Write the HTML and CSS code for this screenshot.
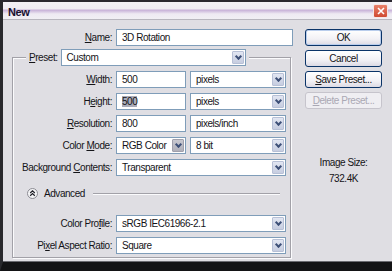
FILE: index.html
```html
<!DOCTYPE html>
<html lang="en">

<head>
  <meta charset="UTF-8">
  <meta name="viewport" content="width=device-width, initial-scale=1.0">
  <title>New</title>
  <link rel="stylesheet" href="styles.css">
</head>

<body>
  <div class="window">
    <div class="titlebar">
      <span class="title">New</span>
      <span class="close">
        <svg width="8" height="8" viewBox="0 0 8 8"><path d="M1 1 L7 7 M7 1 L1 7" stroke="#fff" stroke-width="1.6" /></svg>
      </span>
    </div>

    <div class="content">
      <div class="main">
        <div class="name-row">
          <label><u>N</u>ame:</label>
          <div class="field name-field">3D Rotation</div>
        </div>

        <fieldset class="preset">
          <legend>
            <label><u>P</u>reset:</label>
            <div class="field select preset-select">Custom<span class="arrow"></span></div>
          </legend>

          <div class="grid">
            <label><u>W</u>idth:</label>
            <div class="field">500</div>
            <div class="field select">pixels<span class="arrow"></span></div>

            <label>H<u>e</u>ight:</label>
            <div class="field"><span class="sel">500</span></div>
            <div class="field select">pixels<span class="arrow"></span></div>

            <label><u>R</u>esolution:</label>
            <div class="field">800</div>
            <div class="field select">pixels/inch<span class="arrow"></span></div>

            <label>Color <u>M</u>ode:</label>
            <div class="field select">RGB Color<span class="arrow hot"></span></div>
            <div class="field select">8 bit<span class="arrow"></span></div>

            <label>Background <u>C</u>ontents:</label>
            <div class="field select span2">Transparent<span class="arrow"></span></div>
          </div>

          <div class="advanced">
            <span class="toggle">
              <svg width="11" height="11" viewBox="0 0 11 11">
                <circle cx="5.5" cy="5.5" r="5" fill="#f4f4f6" stroke="#8c8c94" />
                <path d="M3.2 5 L5.5 2.8 L7.8 5 M3.2 7.8 L5.5 5.6 L7.8 7.8" fill="none" stroke="#202028" stroke-width="1.2" />
              </svg>
            </span>
            <span>Advanced</span>
            <span class="rule"></span>
          </div>

          <div class="grid">
            <label>Color Pro<u>f</u>ile:</label>
            <div class="field select span2">sRGB IEC61966-2.1<span class="arrow"></span></div>

            <label>Pi<u>x</u>el Aspect Ratio:</label>
            <div class="field select span2">Square<span class="arrow"></span></div>
          </div>
        </fieldset>
      </div>

      <div class="side">
        <div class="btn default">OK</div>
        <div class="btn">Cancel</div>
        <div class="btn"><u>S</u>ave Preset...</div>
        <div class="btn disabled"><u>D</u>elete Preset...</div>
        <div class="size">
          <div>Image Size:</div>
          <div>732.4K</div>
        </div>
      </div>
    </div>
  </div>
</body>

</html>
```

FILE: styles.css
```css
* {
  box-sizing: border-box;
}

body {
  margin: 0;
  background: #111;
  font-family: "Liberation Sans", Arial, sans-serif;
  font-size: 10px;
  letter-spacing: -0.45px;
  color: #141418;
}

u {
  text-decoration-thickness: 1px;
  text-underline-offset: 1px;
}

.window {
  width: 392px;
  height: 271px;
  display: flex;
  flex-direction: column;
  background: #dfdee3;
  border-top: 2px solid #2a2830;
  border-left: 3px solid #28282c;
  border-bottom: 9px solid #131315;
  box-shadow: inset 0 -1px 0 #6a6a70;
}

/* title bar */
.titlebar {
  height: 18px;
  display: flex;
  align-items: center;
  justify-content: space-between;
  padding: 0 4px 0 5px;
  background: linear-gradient(to bottom, #f3f1f6 0, #efecf3 40%, #c8b2d8 48%, #d9cbe4 58%, #eeeaf2 70%, #f1eff4 100%);
  border-bottom: 1px solid #b8b6be;
}

.title {
  font-size: 11px;
  font-weight: bold;
  color: #181030;
  padding-top: 2px;
}

.close {
  width: 15px;
  height: 14px;
  display: flex;
  align-items: center;
  justify-content: center;
  background: linear-gradient(#e8806a, #d04a32);
  border: 1px solid #f4e6e6;
  border-radius: 2px;
}

.content {
  flex: 1;
  display: flex;
  padding: 9px 0 0 9px;
}

.main {
  width: 284px;
}

/* form rows */
label {
  text-align: right;
  white-space: nowrap;
}

.name-row {
  display: flex;
  align-items: center;
  gap: 4px;
  height: 17px;
}

.name-row label {
  width: 100px;
}

.field {
  position: relative;
  height: 17px;
  line-height: 15px;
  padding: 0 5px;
  background: #fff;
  border: 1px solid #7f9db9;
  white-space: nowrap;
  overflow: hidden;
}

.name-field {
  width: 177px;
}

.sel {
  background: #a9abb8;
}

.select {
  padding-right: 16px;
}

.arrow {
  position: absolute;
  top: 1px;
  right: 1px;
  width: 12px;
  height: 13px;
  border: 1px solid #b7c0d6;
  border-radius: 1px;
  background: linear-gradient(#e2e6f2, #c6cde0);
}

.arrow::after {
  content: "";
  position: absolute;
  left: 3px;
  top: 2px;
  width: 3px;
  height: 3px;
  border-right: 2px solid #3e5078;
  border-bottom: 2px solid #3e5078;
  transform: rotate(45deg);
}

.arrow.hot {
  background: linear-gradient(#c8c8d0, #b0b0ba);
  border-color: #a0a0ac;
}

/* preset group */
.preset {
  width: 279px;
  margin: 3px 0 0;
  padding: 5px 3px 3px 0;
  border: 1px solid #a2a1a8;
  box-shadow: 1px 1px 0 #fbfbfd, inset 1px 1px 0 #fbfbfd;
}

legend {
  display: flex;
  align-items: center;
  gap: 3px;
  margin-left: 13px;
  padding: 0 3px;
  background: #dfdee3;
}

.preset-select {
  width: 185px;
}

.grid {
  display: grid;
  grid-template-columns: 99px 70px 96px;
  grid-auto-rows: 17px;
  column-gap: 4px;
  row-gap: 5px;
  align-items: center;
}

.span2 {
  grid-column: span 2;
}

.advanced {
  display: flex;
  align-items: center;
  gap: 6px;
  height: 13px;
  margin: 11px 7px 15px 14px;
}

.toggle {
  display: flex;
}

.toggle svg {
  display: block;
}

.rule {
  flex: 1;
  margin-left: 2px;
  border-top: 1px solid #a2a1a8;
  border-bottom: 1px solid #fbfbfd;
}

/* buttons */
.side {
  width: 77px;
  margin-left: 9px;
  display: flex;
  flex-direction: column;
  gap: 4px;
}

.btn {
  height: 17px;
  line-height: 15px;
  text-align: center;
  white-space: nowrap;
  border: 1px solid #0b3468;
  border-radius: 3px;
  background: linear-gradient(#ffffff, #f2f1f5 60%, #dcdae4);
  color: #141418;
}

.btn.default {
  box-shadow: inset 0 0 0 1px #b9cdec;
}

.btn.disabled {
  border-color: #c6c4cc;
  background: #efeef2;
  color: #aaa8b4;
}

.size {
  margin-top: 42px;
  line-height: 16px;
  text-align: center;
}
```
